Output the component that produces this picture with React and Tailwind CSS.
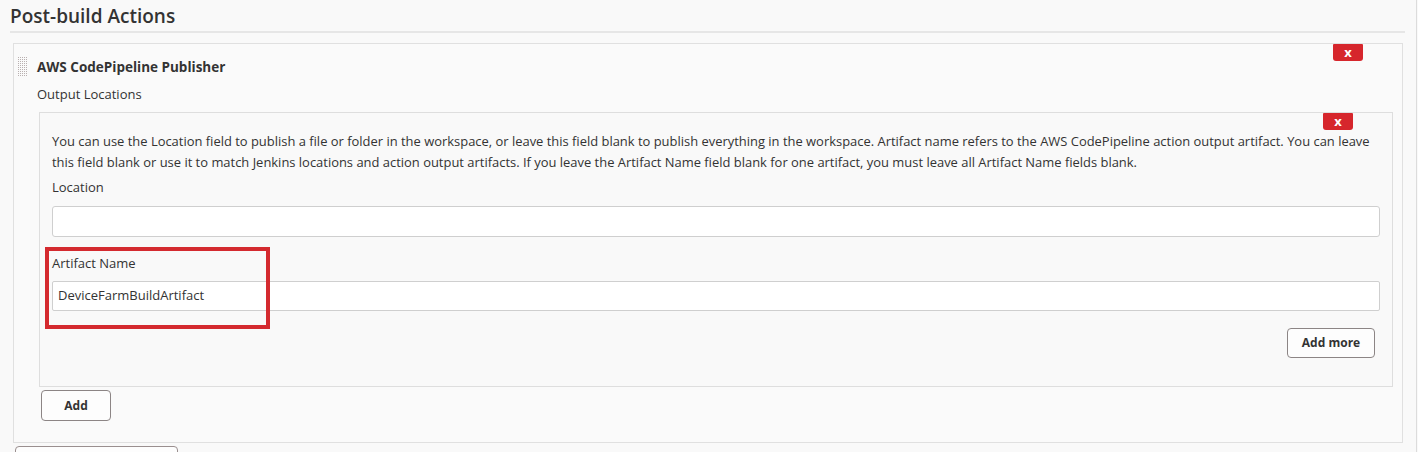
import React from "react";

function Handle() {
  const dots = [];
  for (let r = 0; r < 10; r++) {
    for (let c = 0; c < 5; c++) {
      dots.push(<rect key={r + "-" + c} x={c * 2} y={r * 2} width="1" height="1" fill="#b9b0b0" />);
    }
  }
  return (
    <svg width="10" height="20" viewBox="0 0 10 20" className="shrink-0">
      {dots}
    </svg>
  );
}

function RedX({ className }) {
  return (
    <div
      className={
        "absolute w-[30px] h-[17px] bg-[#d6262c] rounded-b-[3px] rounded-t-[1px] flex items-center justify-center text-white text-[13px] font-bold leading-none pb-[1px] " +
        className
      }
    >
      x
    </div>
  );
}

export default function App() {
  return (
    <div className="w-[1418px] h-[452px] overflow-hidden bg-[#f9f9f9] text-[#333] font-['Open_Sans',sans-serif]">
      <div className="w-[1417px] h-full border-r border-[#dcdcdc] pl-[10px] pr-[11px] pt-[3px]">
        <h2 className="text-[19px] font-semibold leading-[26px] pb-[2px] border-b-2 border-[#e6e6e6] text-[#333]">
          Post-build Actions
        </h2>
        <div className="relative ml-[3px] mr-[2px] mt-[10px] border border-[#e0e0e0] bg-[#fafafa] pt-[13px] pb-[21px]">
          <RedX className="top-0 right-[39px]" />
          <div className="flex items-center h-[20px] pl-[4px] gap-[9px]">
            <Handle />
            <span className="text-[13.5px] font-bold leading-[20px]">AWS CodePipeline Publisher</span>
          </div>
          <div className="pl-[23px] mt-[7px] text-[13px] leading-[20px]">Output Locations</div>
          <div className="relative ml-[25px] mr-[9px] mt-[8px] border border-[#dedede] bg-[#f9f9f9] pl-[12px] pr-[12px] pt-[18px] pb-[28px]">
            <RedX className="top-0 right-[39px]" />
            <div className="text-[12.95px] leading-[21px] whitespace-nowrap">
              <div>
                You can use the Location field to publish a file or folder in the workspace, or leave this field blank to publish everything in the workspace. Artifact name refers to the AWS CodePipeline action output artifact. You can leave
              </div>
              <div>
                this field blank or use it to match Jenkins locations and action output artifacts. If you leave the Artifact Name field blank for one artifact, you must leave all Artifact Name fields blank.
              </div>
            </div>
            <div className="mt-[4px] text-[13px] leading-[21px]">Location</div>
            <div className="mt-[8px] h-[31px] border border-[#cfcfcf] rounded-[3px] bg-white" />
            <div className="mt-[16px] text-[13px] leading-[21px]">Artifact Name</div>
            <div className="mt-[7px] h-[30px] border border-[#cfcfcf] rounded-[2px] bg-white flex items-center pl-[5px] text-[13px]">
              DeviceFarmBuildArtifact
            </div>
            <div className="flex justify-end mt-[17px] pr-[5px]">
              <button className="h-[30px] w-[88px] border border-[#8c8585] rounded-[4px] bg-[#fdfdfd] text-[12px] font-bold text-[#333]">
                Add more
              </button>
            </div>
            <div className="absolute left-[5px] top-[134px] w-[225px] h-[82px] border-[4px] border-[#d42a2f] pointer-events-none" />
          </div>
          <div className="mt-[3px] ml-[27px]">
            <button className="h-[31px] w-[70px] border border-[#8c8585] rounded-[4px] bg-[#fdfdfd] text-[12px] font-bold text-[#333]">
              Add
            </button>
          </div>
        </div>
        <div className="mt-[3px] ml-[5px] w-[163px] h-[20px] border border-[#9a8f8f] rounded-[4px] bg-[#fdfdfd]" />
      </div>
    </div>
  );
}
